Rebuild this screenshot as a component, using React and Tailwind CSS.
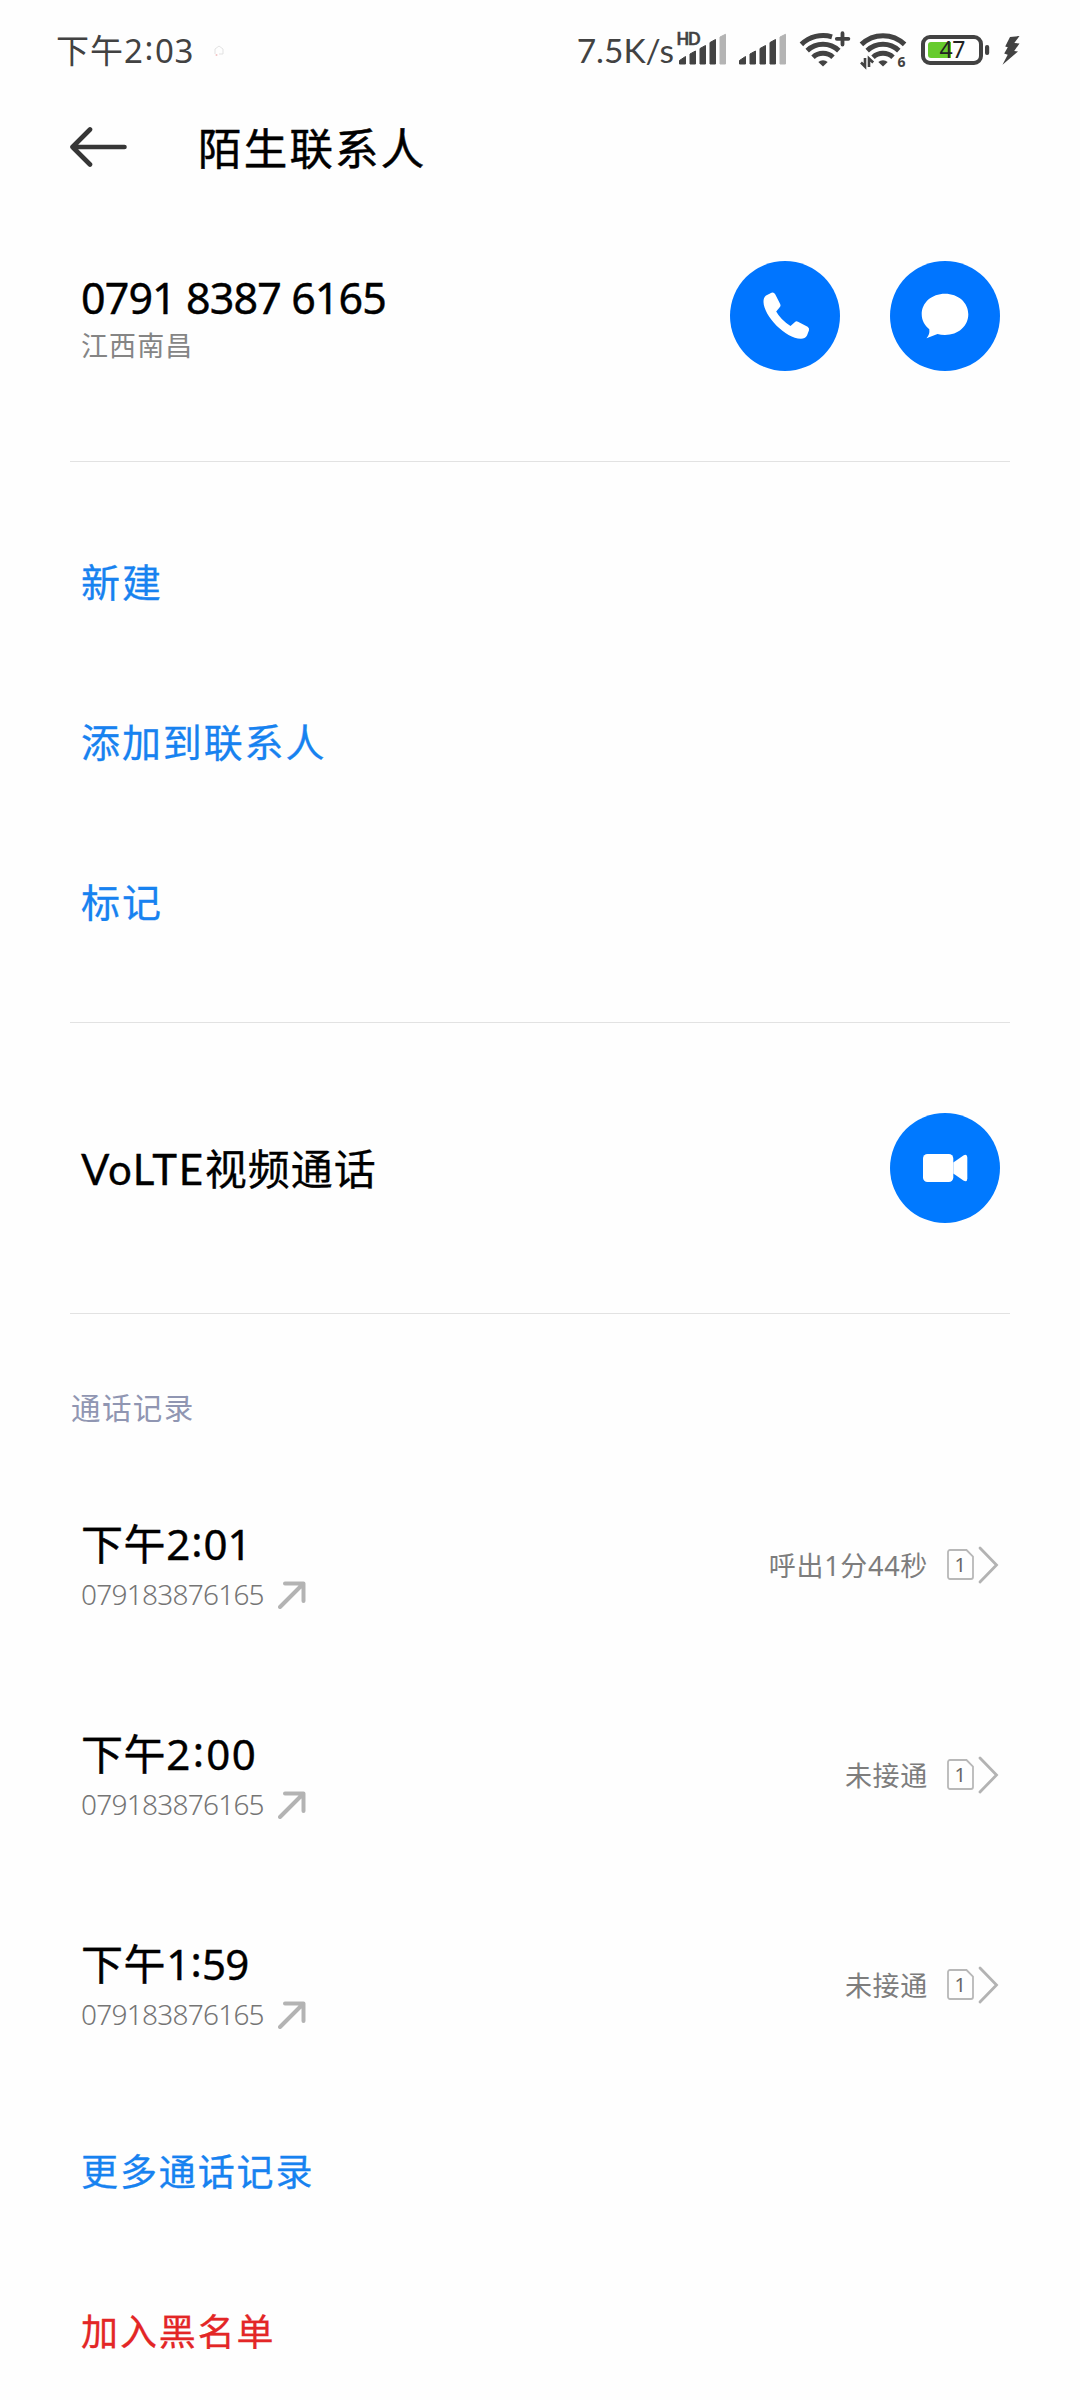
import React from 'react';

const actions = ['新建', '添加到联系人', '标记'];

const calls = [
  { hour: '2', minute: '01', spacing: 'tracking-[0px]', number: '079183876165', status: ['呼出', '1', '分', '44', '秒'] },
  { hour: '2', minute: '00', spacing: 'tracking-[1.4px]', number: '079183876165', status: ['未接通'] },
  { hour: '1', minute: '59', spacing: 'tracking-[-0.8px]', number: '079183876165', status: ['未接通'] },
];

const SignalBars = ({ hd }) => (
  <svg width="50" height="36" viewBox="0 0 50 36" className="overflow-visible">
    <g fill="#424242" stroke="#424242" strokeWidth="1" strokeLinejoin="round">
      <path d="M0.5 28.5 L6.5 24.5 V32 H0.5Z" />
      <path d="M11 22 L16.5 19 V32 H11Z" />
      <path d="M21 16.5 L26.5 13.5 V32 H21Z" />
      <path d="M31 10.5 L36.5 7.5 V32 H31Z" />
    </g>
    <path d="M41 5 L46.5 2.3 V32 H41Z" fill="#b4b4b4" stroke="#b4b4b4" strokeWidth="1" strokeLinejoin="round" />
    {hd && (
      <text x="-2.5" y="13" fontSize="16.5" fontWeight="700" fontFamily="Lato" fill="#424242" stroke="#424242" strokeWidth="0.4" textLength="24">HD</text>
    )}
  </svg>
);

const WifiArcs = ({ outer }) => (
  <>
    <g fill="none" stroke="#424242" strokeWidth="5">
      <path d={outer} />
      <path d="M7.2 18.6 A23 23 0 0 1 38.8 18.6" />
      <path d="M13 25.2 A14.6 14.6 0 0 1 33 25.2" />
    </g>
    <path d="M18.3 30 A7 7 0 0 1 27.7 30 L23 34.6Z" fill="#424242" />
  </>
);

const WifiPlus = () => (
  <svg width="50" height="36" viewBox="0 0 50 36" className="overflow-visible">
    <WifiArcs outer="M1.4 12.4 A31 31 0 0 1 32 4.8" />
    <path d="M42.5 1.2 V12.6 M36.8 6.8 H48.4" stroke="#424242" strokeWidth="3.8" strokeLinecap="round" />
  </svg>
);

const WifiSix = () => (
  <svg width="50" height="36" viewBox="0 0 50 36" className="overflow-visible">
    <WifiArcs outer="M1.4 12.4 A31 31 0 0 1 44.6 12.4" />
    <path d="M1 30.5 L5 34.5 V26 M9 35 V26.5 L13.2 30.5" fill="none" stroke="#424242" strokeWidth="2.6" />
    <text x="37.5" y="35.4" fontSize="14" fontWeight="700" fontFamily="Noto Sans" fill="#424242">6</text>
  </svg>
);

const Battery = () => (
  <svg width="70" height="30" viewBox="0 0 70 30" className="overflow-visible">
    <rect x="2" y="2" width="58" height="26" rx="7" fill="none" stroke="#424242" strokeWidth="4" />
    <path d="M10 7 H30 V23 H10 A3 3 0 0 1 7 20 V10 A3 3 0 0 1 10 7Z" fill="#66cb2d" />
    <rect x="64" y="10" width="4.2" height="10" rx="2" fill="#424242" />
    <text x="18.5" y="23.4" fontSize="23" fontFamily="Noto Sans" fill="#222222" textLength="26">47</text>
  </svg>
);

const Bolt = () => (
  <svg width="18" height="29" viewBox="0 0 18 29">
    <path d="M8 1 L17.5 0 L12.3 7 L17.5 7.4 L12.2 15 L16 15.4 L0.5 28.8 L5.7 18.7 L2.2 17.5 L5.8 11.3 L3.2 10.6Z" fill="#424242" />
  </svg>
);

const Time = ({ hour, minute, spacing = 'tracking-[0.6px]' }) => (
  <span className={`font-['Noto_Sans','Noto_Sans_CJK_SC',sans-serif] ${spacing}`}>
    {hour}
    <span className="mx-[1px] align-[3px] leading-none">:</span>
    {minute}
  </span>
);

const StatusBar = () => (
  <div className="flex h-[100px] items-center pl-[56px] pr-[60px] text-[#424242]">
    <span className="text-[33px] leading-[40px]">
      <span className="tracking-[1px]">下午</span>
      <Time hour="2" minute="03" />
    </span>
    <svg width="10" height="12" viewBox="0 0 10 12" className="absolute left-[214px] top-[45px]">
      <path d="M1 4 L5 1 L9 4 V9 H5 M1 4 V9" fill="none" stroke="#dcdcdc" strokeWidth="0.8" />
      <circle cx="2.5" cy="10" r="1" fill="#f2c4c4" />
    </svg>
    <div className="ml-auto flex items-center">
      <span className="mr-[5px] text-[33.5px] leading-[40px]">7.5K/s</span>
      <SignalBars hd />
      <span className="w-[10px]" />
      <SignalBars />
      <span className="w-[11px]" />
      <WifiPlus />
      <span className="w-[10px]" />
      <WifiSix />
      <span className="w-[11px]" />
      <Battery />
      <span className="w-[11px]" />
      <Bolt />
    </div>
  </div>
);

const CircleButton = ({ label, color = 'bg-[#0075ff]', children }) => (
  <button aria-label={label} className={`flex size-[110px] items-center justify-center rounded-full ${color}`}>
    <svg width="110" height="110" viewBox="0 0 110 110" fill="#ffffff">
      {children}
    </svg>
  </button>
);

const Divider = () => <div className="mx-[70px] h-px bg-[#e2e2e2]" />;

const CallRow = ({ call }) => (
  <li className="flex h-[210px] items-center justify-between pl-[81px] pr-[81px]">
    <div className="flex flex-col">
      <span className="text-[42px] leading-[56px] text-black [-webkit-text-stroke:0.4px_black]">
        <span className="tracking-[0.6px]">下午</span>
        <Time hour={call.hour} minute={call.minute} spacing={call.spacing} />
      </span>
      <span className="flex items-center">
        <span className="w-[183px] whitespace-nowrap font-['Noto_Sans',sans-serif] text-[28px] font-light leading-[44px] tracking-[-0.75px] text-[#757575]">{call.number}</span>
        <svg width="28" height="28" viewBox="0 0 28 28" className="ml-[14px] mt-[2px]">
          <path d="M2 26 L25 3 M7 2.5 H25.5 V20" fill="none" stroke="#b3b3b3" strokeWidth="4" strokeLinecap="round" strokeLinejoin="round" />
        </svg>
      </span>
    </div>
    <div className="flex items-center">
      <span className="mr-[19px] text-[27px] leading-[40px] tracking-[0.7px] text-[#7d7d7d]">
        {call.status.map((part, i) => (
          <span key={i} className={/\d/.test(part) ? "font-['Noto_Sans',sans-serif]" : ''}>{part}</span>
        ))}
      </span>
      <svg width="27" height="31" viewBox="0 0 27 31" className="-mt-[3px]">
        <path d="M3 1 H19.5 L26 7.5 V28 A2 2 0 0 1 24 30 H3 A2 2 0 0 1 1 28 V3 A2 2 0 0 1 3 1Z" fill="none" stroke="#b8b8b8" strokeWidth="1.8" />
        <text x="13.3" y="22.5" textAnchor="middle" fontSize="20" fontFamily="Noto Sans" fill="#666666">1</text>
      </svg>
      <svg width="21" height="38" viewBox="0 0 21 38" className="-mt-[2px] ml-[4px]">
        <path d="M2 2 L18.5 19 L2 36" fill="none" stroke="#b3b3b3" strokeWidth="2.8" strokeLinecap="round" />
      </svg>
    </div>
  </li>
);

const App = () => {
  return (
    <div className="relative h-[2400px] w-[1080px] overflow-hidden bg-[#fefefe] font-['Lato','Noto_Sans_CJK_SC',sans-serif]">
      <StatusBar />

      <header className="flex h-[94px] items-center pl-[69px]">
        <svg width="58" height="40" viewBox="0 0 58 40">
          <path d="M21 2.5 L3.5 20 L21 37.5 M3.5 20 H55.5" fill="none" stroke="#363636" strokeWidth="4.6" strokeLinecap="round" strokeLinejoin="round" />
        </svg>
        <h1 className="ml-[71px] mt-[2px] text-[43.5px] leading-[60px] tracking-[2.2px] text-black [-webkit-text-stroke:0.5px_black]">陌生联系人</h1>
      </header>

      <section className="flex h-[267px] items-start justify-between pl-[81px] pr-[80px] pt-[67px]">
        <div className="flex flex-col pt-[9px]">
          <span className="font-['Noto_Sans',sans-serif] text-[43px] leading-[56px] tracking-[-0.9px] text-black [-webkit-text-stroke:0.4px_black]">0791 8387 6165</span>
          <span className="text-[27px] leading-[40px] tracking-[1.1px] text-[#858585]">江西南昌</span>
        </div>
        <div className="flex gap-[50px]">
          <CircleButton label="拨打电话">
            <path d="M36 34.5 L41.5 31.8 Q43.8 31 45.2 33.2 L50.3 43.2 Q51.2 45 49.5 46.5 L46.2 50.5 Q50.5 58.5 60.5 65 L65 61 Q66.2 59.8 68 60.7 L77.6 65.8 Q79.5 67 79 69.3 L77 74.5 Q75 77.8 71 77.8 C56 78 33.8 55 33.5 41 Q33.3 36.5 36 34.5Z" />
          </CircleButton>
          <CircleButton label="发送短信">
            <path d="M55 32.7 C68.2 32.7 78.3 41.5 78.3 53.3 C78.3 65.2 68.2 74 55 74 Q50.8 74 47.5 73 L36.5 77.2 Q40 73.5 39.3 68.3 C34.8 64.8 31.7 59.5 31.7 53.3 C31.7 41.5 41.8 32.7 55 32.7Z" />
          </CircleButton>
        </div>
      </section>
      <Divider />

      <ul className="pb-[40px] pt-[40px]">
        {actions.map((label) => (
          <li key={label} className="flex h-[160px] items-center pl-[81px] text-[39px] leading-[56px] tracking-[1.9px] text-[#1782f0] [-webkit-text-stroke:0.3px_#1782f0]">
            {label}
          </li>
        ))}
      </ul>
      <Divider />

      <section className="flex h-[290px] items-center justify-between pl-[81px] pr-[80px]">
        <span className="pt-[2px] text-[42px] leading-[56px] tracking-[1.7px] text-black [-webkit-text-stroke:0.3px_black]">
          VoLTE<span className="tracking-[1px]">视频通话</span>
        </span>
        <CircleButton label="视频通话" color="bg-[#0079ff]">
          <rect x="33" y="41" width="30.3" height="28" rx="4.5" />
          <path d="M63.3 49.5 L73.8 42.2 Q77.3 40.8 77.3 44.5 V65.5 Q77.3 69.2 73.8 67.8 L63.3 60.5Z" />
        </CircleButton>
      </section>
      <Divider />

      <h2 className="h-[147px] pl-[71px] pt-[72px] text-[29.5px] leading-[44px] tracking-[1.4px] text-[#9096b2]">通话记录</h2>
      <ul>
        {calls.map((call) => (
          <CallRow key={call.hour + call.minute} call={call} />
        ))}
      </ul>

      <div className="text-[37px] leading-[56px] tracking-[1.9px]">
        <div className="flex h-[160px] items-center pl-[81px] pt-px text-[#1782f0] [-webkit-text-stroke:0.3px_#1782f0]">更多通话记录</div>
        <div className="flex h-[160px] items-center pl-[81px] pt-px text-[#e32626] [-webkit-text-stroke:0.3px_#e32626]">加入黑名单</div>
      </div>
    </div>
  );
};

export default App;
